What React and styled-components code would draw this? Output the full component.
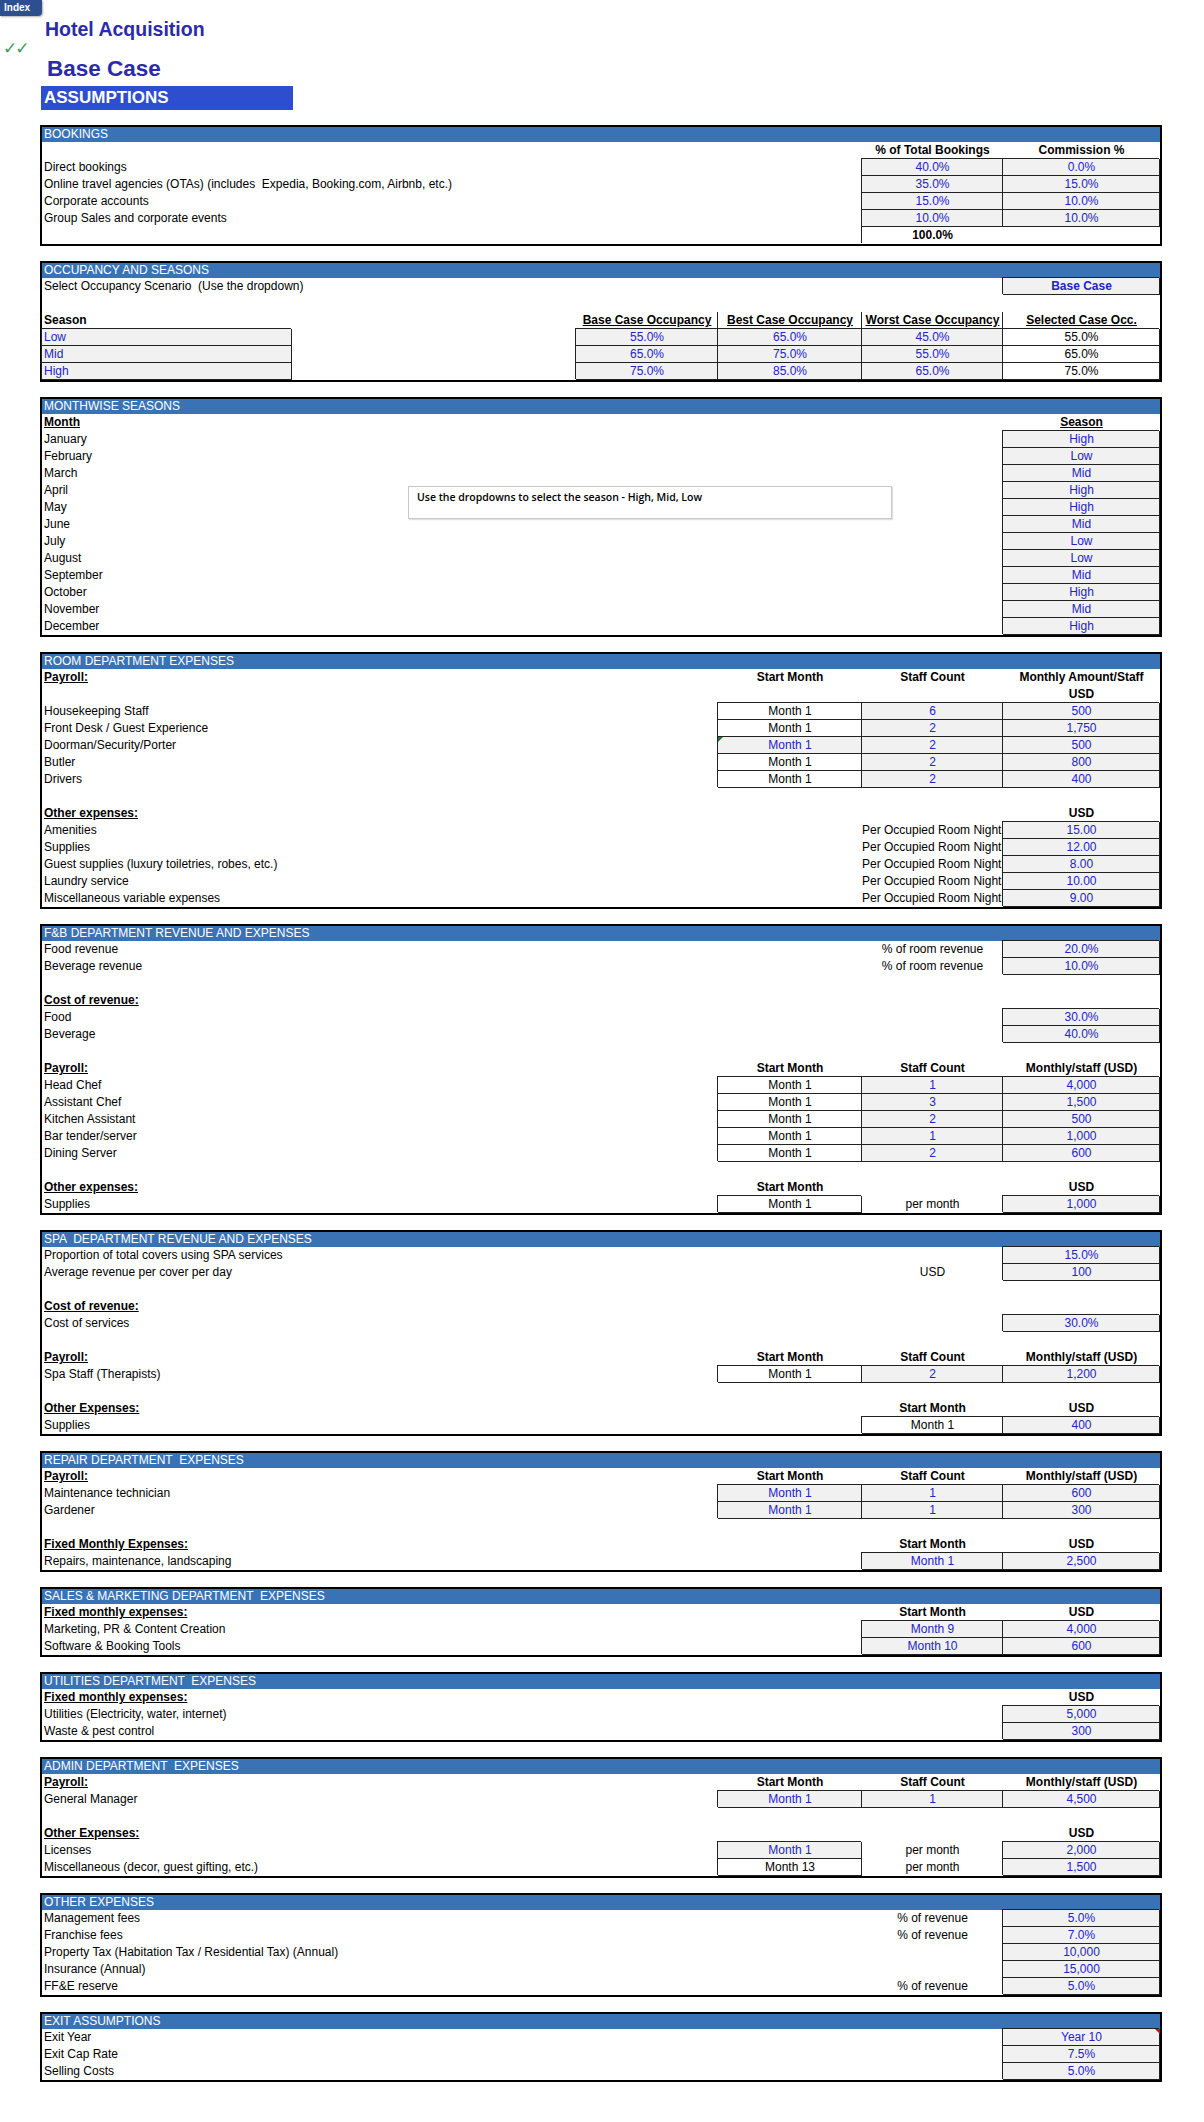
import React from "react";
import styled, { createGlobalStyle, css } from "styled-components";

const Global = createGlobalStyle`
  html, body { margin: 0; padding: 0; background: #fff; }
  body { font-family: "Liberation Sans", Arial, sans-serif; color: #000; }
`;

const Page = styled.div`
  position: relative;
  width: 1204px;
  min-height: 2122px;
  padding-bottom: 40px;
  box-sizing: border-box;
`;

const Badge = styled.div`
  position: absolute;
  top: 0;
  left: 0;
  width: 42px;
  height: 16px;
  background: #2d4f8f;
  border-radius: 0 0 4px 0;
  color: #fff;
  font-weight: bold;
  font-size: 10px;
  line-height: 16px;
  padding-left: 4px;
  box-sizing: border-box;
  box-shadow: 1px 1px 2px rgba(0,0,0,0.3);
`;

const Checks = styled.div`
  position: absolute;
  top: 38px;
  left: 3px;
  font-family: "DejaVu Sans", sans-serif;
  font-size: 17px;
  color: #3f9a5a;
  letter-spacing: -2px;
`;

const Top = styled.div`
  padding: 17px 0 0 45px;
`;

const Title = styled.div`
  font-weight: bold;
  color: #2b2baa;
  font-size: ${p => p.$size}px;
  line-height: ${p => p.$lh}px;
  margin-top: ${p => p.$mt}px;
  padding-left: ${p => p.$pl || 0}px;
`;

const AssumptionBar = styled.div`
  margin: 4px 0 0 -4px;
  width: 252px;
  height: 24px;
  background: #2e4ed0;
  color: #fff;
  font-weight: bold;
  font-size: 17px;
  line-height: 24px;
  padding-left: 3px;
  box-sizing: border-box;
`;

const Panels = styled.div`
  margin: 15px 0 0 40px;
  display: flex;
  flex-direction: column;
  gap: 15px;
  width: 1122px;
`;

const Panel = styled.section`
  position: relative;
  border: 2px solid #000;
`;

const PanelHead = styled.div`
  height: 15px;
  background: #3a73b5;
  color: #fff;
  font-size: 12px;
  line-height: 15px;
  padding-left: 2px;
  white-space: pre;
`;

const Row = styled.div`
  display: grid;
  grid-template-columns: 534px 142px 144px 141px 157px;
  height: 17px;
  font-size: 12px;
  line-height: 17px;
`;

const lineBox = css`
  box-shadow: inset -1px -1px 0 #222, -1px -1px 0 #222;
`;

const Label = styled.div`
  padding-left: 2px;
  white-space: pre;
  overflow: hidden;
  ${p => p.$kind === "s" && css`font-weight: bold; text-decoration: underline;`}
  ${p => p.$kind === "b" && css`font-weight: bold;`}
  ${p => p.$kind === "box" && css`
    width: 250px;
    box-sizing: border-box;
    background: #f1f1f1;
    color: #2323c8;
    ${lineBox}
  `}
`;

const Cell = styled.div`
  position: relative;
  text-align: center;
  white-space: nowrap;
  overflow: ${p => (p.$kind === "clip" ? "hidden" : "visible")};
  ${p => (p.$kind === "in" || p.$kind === "sel") && css`
    background: #f1f1f1;
    color: #2323c8;
    ${lineBox}
  `}
  ${p => p.$kind === "sel" && css`font-weight: bold;`}
  ${p => p.$kind === "out" && lineBox}
  ${p => (p.$kind === "hd" || p.$kind === "hdu" || p.$kind === "hul") && css`font-weight: bold;`}
  ${p => (p.$kind === "hdu" || p.$kind === "hul") && css`text-decoration: underline;`}
  ${p => p.$kind === "hul" && css`box-shadow: -1px 0 0 #222; overflow: hidden;`}
  ${p => p.$kind === "tot" && css`font-weight: bold; box-shadow: -1px -1px 0 #222;`}
  ${p => p.$kind === "clip" && css`text-align: left; padding-left: 0;`}
  ${p => p.$mark === "green" && css`
    &::before {
      content: "";
      position: absolute;
      left: 0; top: 0;
      border-top: 5px solid #1f7a2a;
      border-right: 5px solid transparent;
    }
  `}
  ${p => p.$mark === "red" && css`
    &::after {
      content: "";
      position: absolute;
      right: 0; top: 0;
      border-top: 5px solid #d01010;
      border-left: 5px solid transparent;
    }
  `}
`;

const Note = styled.div`
  position: absolute;
  top: 87px;
  left: 366px;
  width: 484px;
  height: 33px;
  box-sizing: border-box;
  border: 1px solid #c8c8c8;
  box-shadow: 1px 1px 1px #e0e0e0;
  background: #fff;
  font-family: "Open Sans", sans-serif;
  font-weight: 600;
  font-size: 10.5px;
  padding: 3px 0 0 8px;
`;

const I = (t, m) => ["in", t, m];
const O = t => ["out", t];
const H = t => ["hd", t];
const HU = t => ["hdu", t];
const HL = t => ["hul", t];
const T = t => ["tx", t];
const CL = t => ["clip", t];
const blank = ["", "l", null, null, null, null];
const PORN = "Per Occupied Room Night";

const sections = [
  {
    title: "BOOKINGS",
    rows: [
      ["", "l", null, null, H("% of Total Bookings"), H("Commission %")],
      ["Direct bookings", "l", null, null, I("40.0%"), I("0.0%")],
      ["Online travel agencies (OTAs) (includes  Expedia, Booking.com, Airbnb, etc.)", "l", null, null, I("35.0%"), I("15.0%")],
      ["Corporate accounts", "l", null, null, I("15.0%"), I("10.0%")],
      ["Group Sales and corporate events", "l", null, null, I("10.0%"), I("10.0%")],
      ["", "l", null, null, ["tot", "100.0%"], null],
    ],
  },
  {
    title: "OCCUPANCY AND SEASONS",
    rows: [
      ["Select Occupancy Scenario  (Use the dropdown)", "l", null, null, null, ["sel", "Base Case"]],
      blank,
      ["Season", "b", HU("Base Case Occupancy"), HL("Best Case Occupancy"), HL("Worst Case Occupancy"), ["hul", "Selected Case Occ."]],
      ["Low", "box", I("55.0%"), I("65.0%"), I("45.0%"), O("55.0%")],
      ["Mid", "box", I("65.0%"), I("75.0%"), I("55.0%"), O("65.0%")],
      ["High", "box", I("75.0%"), I("85.0%"), I("65.0%"), O("75.0%")],
    ],
  },
  {
    title: "MONTHWISE SEASONS",
    note: "Use the dropdowns to select the season - High, Mid, Low",
    rows: [
      ["Month", "s", null, null, null, HU("Season")],
      ...[
        ["January", "High"], ["February", "Low"], ["March", "Mid"], ["April", "High"],
        ["May", "High"], ["June", "Mid"], ["July", "Low"], ["August", "Low"],
        ["September", "Mid"], ["October", "High"], ["November", "Mid"], ["December", "High"],
      ].map(([m, s]) => [m, "l", null, null, null, I(s)]),
    ],
  },
  {
    title: "ROOM DEPARTMENT EXPENSES",
    rows: [
      ["Payroll:", "s", null, H("Start Month"), H("Staff Count"), H("Monthly Amount/Staff")],
      ["", "l", null, null, null, H("USD")],
      ["Housekeeping Staff", "l", null, O("Month 1"), I("6"), I("500")],
      ["Front Desk / Guest Experience", "l", null, O("Month 1"), I("2"), I("1,750")],
      ["Doorman/Security/Porter", "l", null, I("Month 1", "green"), I("2"), I("500")],
      ["Butler", "l", null, O("Month 1"), I("2"), I("800")],
      ["Drivers", "l", null, O("Month 1"), I("2"), I("400")],
      blank,
      ["Other expenses:", "s", null, null, null, H("USD")],
      ["Amenities", "l", null, null, CL(PORN), I("15.00")],
      ["Supplies", "l", null, null, CL(PORN), I("12.00")],
      ["Guest supplies (luxury toiletries, robes, etc.)", "l", null, null, CL(PORN), I("8.00")],
      ["Laundry service", "l", null, null, CL(PORN), I("10.00")],
      ["Miscellaneous variable expenses", "l", null, null, CL(PORN), I("9.00")],
    ],
  },
  {
    title: "F&B DEPARTMENT REVENUE AND EXPENSES",
    rows: [
      ["Food revenue", "l", null, null, T("% of room revenue"), I("20.0%")],
      ["Beverage revenue", "l", null, null, T("% of room revenue"), I("10.0%")],
      blank,
      ["Cost of revenue:", "s", null, null, null, null],
      ["Food", "l", null, null, null, I("30.0%")],
      ["Beverage", "l", null, null, null, I("40.0%")],
      blank,
      ["Payroll:", "s", null, H("Start Month"), H("Staff Count"), H("Monthly/staff (USD)")],
      ["Head Chef", "l", null, O("Month 1"), I("1"), I("4,000")],
      ["Assistant Chef", "l", null, O("Month 1"), I("3"), I("1,500")],
      ["Kitchen Assistant", "l", null, O("Month 1"), I("2"), I("500")],
      ["Bar tender/server", "l", null, O("Month 1"), I("1"), I("1,000")],
      ["Dining Server", "l", null, O("Month 1"), I("2"), I("600")],
      blank,
      ["Other expenses:", "s", null, H("Start Month"), null, H("USD")],
      ["Supplies", "l", null, O("Month 1"), T("per month"), I("1,000")],
    ],
  },
  {
    title: "SPA  DEPARTMENT REVENUE AND EXPENSES",
    rows: [
      ["Proportion of total covers using SPA services", "l", null, null, null, I("15.0%")],
      ["Average revenue per cover per day", "l", null, null, T("USD"), I("100")],
      blank,
      ["Cost of revenue:", "s", null, null, null, null],
      ["Cost of services", "l", null, null, null, I("30.0%")],
      blank,
      ["Payroll:", "s", null, H("Start Month"), H("Staff Count"), H("Monthly/staff (USD)")],
      ["Spa Staff (Therapists)", "l", null, O("Month 1"), I("2"), I("1,200")],
      blank,
      ["Other Expenses:", "s", null, null, H("Start Month"), H("USD")],
      ["Supplies", "l", null, null, O("Month 1"), I("400")],
    ],
  },
  {
    title: "REPAIR DEPARTMENT  EXPENSES",
    rows: [
      ["Payroll:", "s", null, H("Start Month"), H("Staff Count"), H("Monthly/staff (USD)")],
      ["Maintenance technician", "l", null, I("Month 1"), I("1"), I("600")],
      ["Gardener", "l", null, I("Month 1"), I("1"), I("300")],
      blank,
      ["Fixed Monthly Expenses:", "s", null, null, H("Start Month"), H("USD")],
      ["Repairs, maintenance, landscaping", "l", null, null, I("Month 1"), I("2,500")],
    ],
  },
  {
    title: "SALES & MARKETING DEPARTMENT  EXPENSES",
    rows: [
      ["Fixed monthly expenses:", "s", null, null, H("Start Month"), H("USD")],
      ["Marketing, PR & Content Creation", "l", null, null, I("Month 9"), I("4,000")],
      ["Software & Booking Tools", "l", null, null, I("Month 10"), I("600")],
    ],
  },
  {
    title: "UTILITIES DEPARTMENT  EXPENSES",
    rows: [
      ["Fixed monthly expenses:", "s", null, null, null, H("USD")],
      ["Utilities (Electricity, water, internet)", "l", null, null, null, I("5,000")],
      ["Waste & pest control", "l", null, null, null, I("300")],
    ],
  },
  {
    title: "ADMIN DEPARTMENT  EXPENSES",
    rows: [
      ["Payroll:", "s", null, H("Start Month"), H("Staff Count"), H("Monthly/staff (USD)")],
      ["General Manager", "l", null, I("Month 1"), I("1"), I("4,500")],
      blank,
      ["Other Expenses:", "s", null, null, null, H("USD")],
      ["Licenses", "l", null, I("Month 1"), T("per month"), I("2,000")],
      ["Miscellaneous (decor, guest gifting, etc.)", "l", null, O("Month 13"), T("per month"), I("1,500")],
    ],
  },
  {
    title: "OTHER EXPENSES",
    rows: [
      ["Management fees", "l", null, null, T("% of revenue"), I("5.0%")],
      ["Franchise fees", "l", null, null, T("% of revenue"), I("7.0%")],
      ["Property Tax (Habitation Tax / Residential Tax) (Annual)", "l", null, null, null, I("10,000")],
      ["Insurance (Annual)", "l", null, null, null, I("15,000")],
      ["FF&E reserve", "l", null, null, T("% of revenue"), I("5.0%")],
    ],
  },
  {
    title: "EXIT ASSUMPTIONS",
    rows: [
      ["Exit Year", "l", null, null, null, I("Year 10", "red")],
      ["Exit Cap Rate", "l", null, null, null, I("7.5%")],
      ["Selling Costs", "l", null, null, null, I("5.0%")],
    ],
  },
];

function SheetRow({ row }) {
  const [label, kind, ...cells] = row;
  return (
    <Row>
      <Label $kind={kind}>{label}</Label>
      {cells.map((c, i) =>
        c ? (
          <Cell key={i} $kind={c[0]} $mark={c[2]}>{c[1]}</Cell>
        ) : (
          <Cell key={i} />
        )
      )}
    </Row>
  );
}

export default function App() {
  return (
    <Page>
      <Global />
      <Badge>Index</Badge>
      <Checks>✓✓</Checks>
      <Top>
        <Title $size={19.5} $lh={24} $mt={0}>Hotel Acquisition</Title>
        <Title $size={22.5} $lh={26} $mt={15} $pl={2}>Base Case</Title>
        <AssumptionBar>ASSUMPTIONS</AssumptionBar>
      </Top>
      <Panels>
        {sections.map(s => (
          <Panel key={s.title}>
            <PanelHead>{s.title}</PanelHead>
            {s.rows.map((r, i) => (
              <SheetRow key={i} row={r} />
            ))}
            {s.note && <Note>{s.note}</Note>}
          </Panel>
        ))}
      </Panels>
    </Page>
  );
}
